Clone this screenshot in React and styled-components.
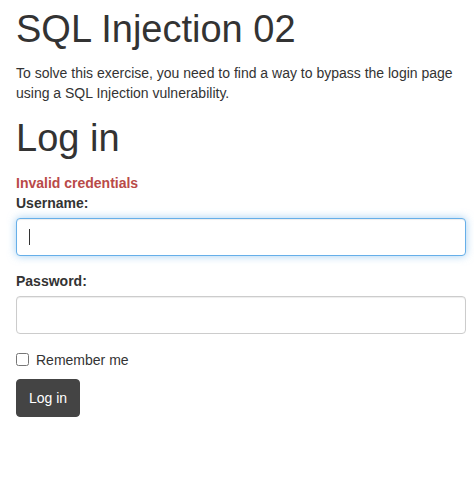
import React from "react";
import styled, { createGlobalStyle, css } from "styled-components";

const GlobalStyle = createGlobalStyle`
  html, body {
    margin: 0;
    padding: 0;
    background: #ffffff;
  }
  body {
    font-family: "Liberation Sans", Arial, Helvetica, sans-serif;
    font-size: 14px;
    line-height: 20px;
    color: #333333;
  }
  * {
    box-sizing: border-box;
  }
`;

const Page = styled.div`
  padding: 9px 8px 0 16px;
  width: 474px;
`;

const Heading = styled.h1`
  margin: 0;
  font-size: 38px;
  font-weight: 400;
  line-height: 1.1;
  color: #333333;
`;

const Intro = styled.p`
  margin: 12px 0 15px 0;
`;

const Form = styled.form`
  display: flex;
  flex-direction: column;
`;

const ErrorText = styled.div`
  margin-top: 13px;
  font-weight: 700;
  color: #b94a48;
`;

const FormGroup = styled.div`
  display: flex;
  flex-direction: column;
  margin-bottom: 15px;
`;

const Label = styled.label`
  display: block;
  margin-bottom: 5px;
  font-weight: 700;
`;

const InputWrap = styled.div`
  position: relative;
`;

const TextInput = styled.input`
  display: block;
  width: 100%;
  height: 38px;
  padding: 8px 12px;
  font-family: inherit;
  font-size: 14px;
  color: #555555;
  background: #ffffff;
  border: 1px solid #cccccc;
  border-radius: 4px;
  box-shadow: inset 0 1px 1px rgba(0, 0, 0, 0.075);
  outline: none;
  caret-color: transparent;

  ${(p) =>
    p.$focused &&
    css`
      border-color: #66afe9;
      box-shadow: inset 0 1px 1px rgba(0, 0, 0, 0.075),
        0 0 8px rgba(102, 175, 233, 0.6);
    `}
`;

const Caret = styled.span`
  position: absolute;
  left: 13px;
  top: 11px;
  width: 1px;
  height: 16px;
  background: #333333;
`;

const CheckRow = styled.label`
  display: flex;
  align-items: center;
  gap: 7px;
  margin: 1px 0 9px 0;
  height: 20px;
`;

const CheckBox = styled.input`
  margin: 0;
  width: 13px;
  height: 13px;
`;

const Button = styled.button`
  align-self: flex-start;
  height: 38px;
  padding: 8px 12px;
  font-family: inherit;
  font-size: 14px;
  line-height: 20px;
  color: #ffffff;
  background: #444444;
  border: 1px solid #444444;
  border-radius: 4px;
  cursor: pointer;
`;

function App() {
  return (
    <Page>
      <GlobalStyle />
      <Heading>SQL Injection 02</Heading>
      <Intro>
        To solve this exercise, you need to find a way to bypass the login page
        using a SQL Injection vulnerability.
      </Intro>
      <Heading>Log in</Heading>
      <Form onSubmit={(e) => e.preventDefault()}>
        <ErrorText>Invalid credentials</ErrorText>
        <FormGroup>
          <Label htmlFor="username">Username:</Label>
          <InputWrap>
            <TextInput id="username" type="text" $focused />
            <Caret />
          </InputWrap>
        </FormGroup>
        <FormGroup>
          <Label htmlFor="password">Password:</Label>
          <TextInput id="password" type="password" />
        </FormGroup>
        <CheckRow>
          <CheckBox type="checkbox" />
          Remember me
        </CheckRow>
        <Button type="submit">Log in</Button>
      </Form>
    </Page>
  );
}

export default App;
